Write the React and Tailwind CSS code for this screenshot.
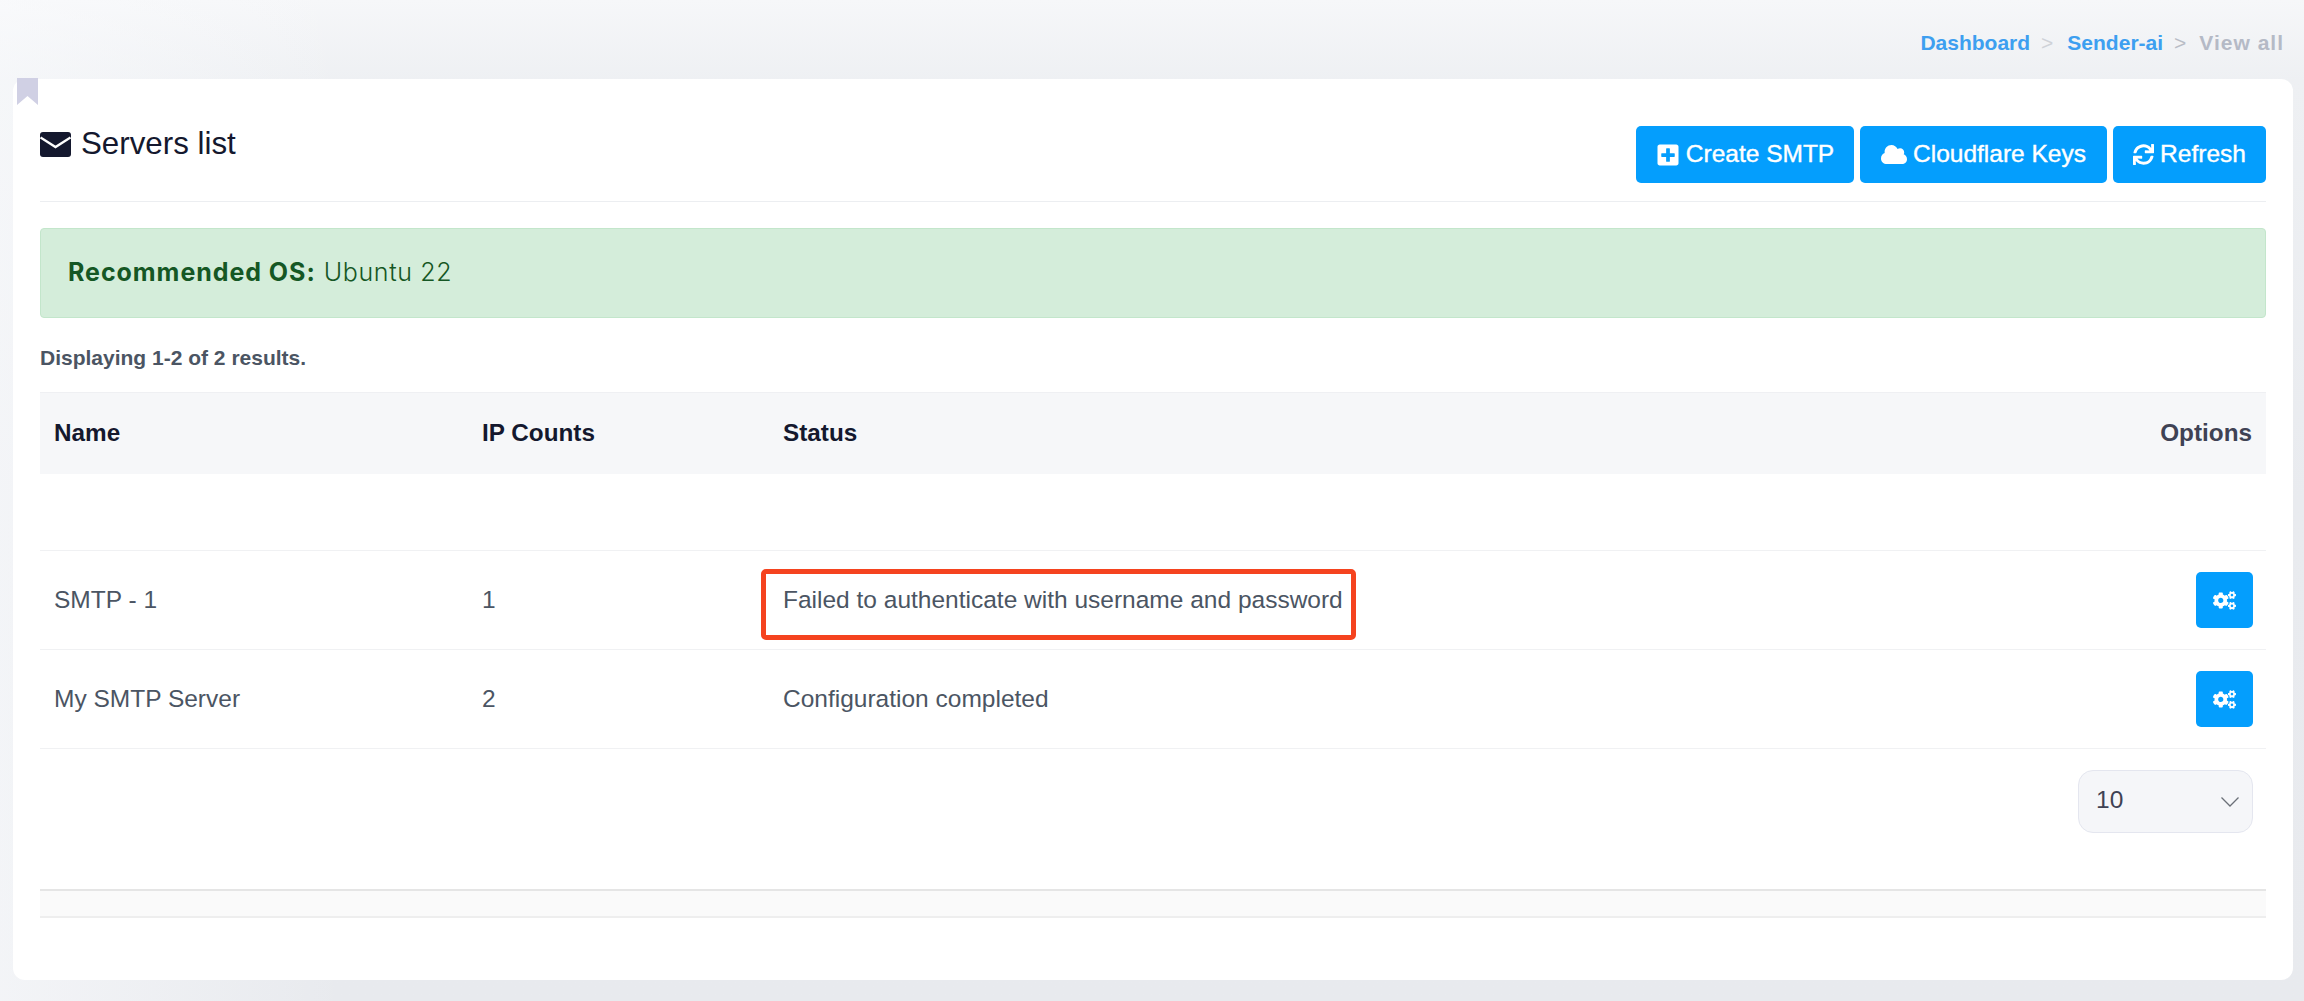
import React from 'react';
import { FaPlusSquare, FaSync, FaCogs } from 'react-icons/fa';

const rows = [
  { name: 'SMTP - 1', ips: 1, status: 'Failed to authenticate with username and password', flagged: true },
  { name: 'My SMTP Server', ips: 2, status: 'Configuration completed' },
];

const CloudIcon = ({ className }) => (
  <svg className={className} viewBox="0 0 26 19" fill="currentColor">
    <path d="M6 19 C2.6 19 0 16.6 0 13.4 C0 10.9 1.5 8.9 3.7 8.1 C3.6 7.6 3.6 7.2 3.6 6.9 C3.6 3.1 6.6 0 10.4 0 C13.2 0 15.6 1.7 16.6 4.1 C17.3 3.6 18.2 3.3 19.1 3.3 C21.4 3.3 23.2 5.1 23.2 7.4 C23.2 8.1 23 8.8 22.7 9.3 C24.7 10.1 26 12 26 14.2 C26 16.9 23.8 19 21 19 Z" />
  </svg>
);

const ActionButton = ({ icon, label, className }) => (
  <button className={`h-[57px] flex items-center justify-center gap-[6px] rounded-[5px] bg-[#049efd] text-white text-[24.5px] font-medium [-webkit-text-stroke:0.4px_white] ${className}`}>
    {icon}
    {label}
  </button>
);

export default function App() {
  return (
    <div className="h-[1001px] overflow-hidden flex flex-col pl-[13px] pr-[11px] font-['Liberation_Sans',Arial,sans-serif] bg-[linear-gradient(90deg,rgba(250,251,253,0.6)_0%,rgba(250,251,253,0)_15%),linear-gradient(180deg,#f6f7f9_0%,#eef0f3_8%,#e9ebef_50%,#e8eaee_100%)]">
      {/* Breadcrumb */}
      <div className="h-[79px] shrink-0 flex items-start justify-end pt-[29px] pr-[9px] text-[21px] leading-[28px] font-bold">
        <a className="text-[#3d9ff0]">Dashboard</a>
        <span className="ml-[11px] font-normal text-[#cfd2d8]">&gt;</span>
        <a className="ml-[14px] text-[#3d9ff0]">Sender-ai</a>
        <span className="ml-[11px] font-normal text-[#b9bdc6]">&gt;</span>
        <span className="ml-[13px] tracking-[1px] text-[#b5bac6]">View all</span>
      </div>

      {/* Card */}
      <div className="relative h-[901px] shrink-0 rounded-[12px] bg-white px-[27px]">
        <div className="absolute left-[4px] -top-px w-[21px] h-[27px] bg-[#d0d0e4] [clip-path:polygon(0_0,100%_0,100%_100%,50%_67%,0_100%)]"></div>

        <div className="h-[123px] flex justify-between items-start pt-[47px] border-b border-[#eceef1]">
          <h1 className="flex items-center gap-[10px] h-[36px] text-[31.3px] font-normal text-[#14182e]">
            <svg className="w-[31px] h-[25px]" viewBox="0 0 31 25">
              <rect width="31" height="25" rx="3" fill="#14182e" />
              <path d="M0.5 5.5 L15.5 15 L30.5 5.5" fill="none" stroke="#fff" strokeWidth="2.4" />
            </svg>
            Servers list
          </h1>
          <div className="flex gap-[6px]">
            <ActionButton icon={<FaPlusSquare className="text-[24px] shrink-0" />} label="Create SMTP" className="w-[218px]" />
            <ActionButton icon={<CloudIcon className="w-[26px] h-[19px] shrink-0" />} label="Cloudflare Keys" className="w-[247px]" />
            <ActionButton icon={<FaSync className="text-[21px] shrink-0" />} label="Refresh" className="w-[153px]" />
          </div>
        </div>

        <div className="mt-[26px] h-[90px] flex items-center pl-[27px] rounded-[4px] border border-[#c3e6cb] bg-[#d4edda] text-[#155724] text-[25px] font-['Inter',sans-serif]">
          <strong className="font-bold tracking-[0.95px] mr-[8px]">Recommended OS:</strong>
          <span className="font-light tracking-[0.65px]">Ubuntu 22</span>
        </div>

        <p className="mt-[28px] h-[24px] text-[21px] leading-[24px] font-bold text-[#4b5563]">Displaying 1-2 of 2 results.</p>

        <table className="mt-[22px] w-full table-fixed border-collapse text-[24.5px] text-[#4b5563]">
          <colgroup>
            <col className="w-[428px]" />
            <col className="w-[301px]" />
            <col />
            <col className="w-[200px]" />
          </colgroup>
          <thead>
            <tr className="h-[81px] bg-[#f6f7f9] border-t border-[#eff0f3] text-left font-bold text-[24.3px] text-[#14182e]">
              <th className="px-[14px]">Name</th>
              <th className="px-[14px]">IP Counts</th>
              <th className="px-[14px]">Status</th>
              <th className="pr-[14px] text-right text-[#3f4254]">Options</th>
            </tr>
          </thead>
          <tbody>
            <tr className="h-[77px] border-b border-[#f0f1f3]"><td colSpan={4}></td></tr>
            {rows.map((row) => (
              <tr key={row.name} className="h-[99px] border-b border-[#f0f1f3]">
                <td className="px-[14px]">{row.name}</td>
                <td className="px-[14px]">{row.ips}</td>
                <td className="px-[14px] whitespace-nowrap">
                  <span className="relative inline-block leading-[30px]">
                    {row.status}
                    {row.flagged && (
                      <span className="absolute -left-[22px] -right-[13px] -top-[16px] -bottom-[25px] rounded-[5px] border-[5px] border-[#f5431f]"></span>
                    )}
                  </span>
                </td>
                <td className="pr-[13px]">
                  <div className="flex justify-end">
                    <button className="w-[57px] h-[56px] flex items-center justify-center rounded-[5px] bg-[#049efd] text-white">
                      <FaCogs className="text-[23px]" />
                    </button>
                  </div>
                </td>
              </tr>
            ))}
          </tbody>
        </table>

        {/* Page size */}
        <div className="mt-[21px] flex justify-end pr-[13px]">
          <div className="w-[175px] h-[63px] flex items-center justify-between pl-[17px] pr-[12px] pb-[2px] rounded-[15px] border border-[#e4e6ef] bg-[#f5f6f9] text-[24.5px] text-[#3f4254]">
            10
            <svg className="w-[20px] h-[12px] mt-[2px]" viewBox="0 0 20 12" fill="none" stroke="#6b7078" strokeWidth="1.3">
              <path d="M1.5 1.5 L10 10 L18.5 1.5" />
            </svg>
          </div>
        </div>

        <div className="mt-[56px] h-[29px] border-t-2 border-b-2 border-t-[#e5e5e5] border-b-[#eeeeee] bg-[#fafafa]"></div>
      </div>
    </div>
  );
}
